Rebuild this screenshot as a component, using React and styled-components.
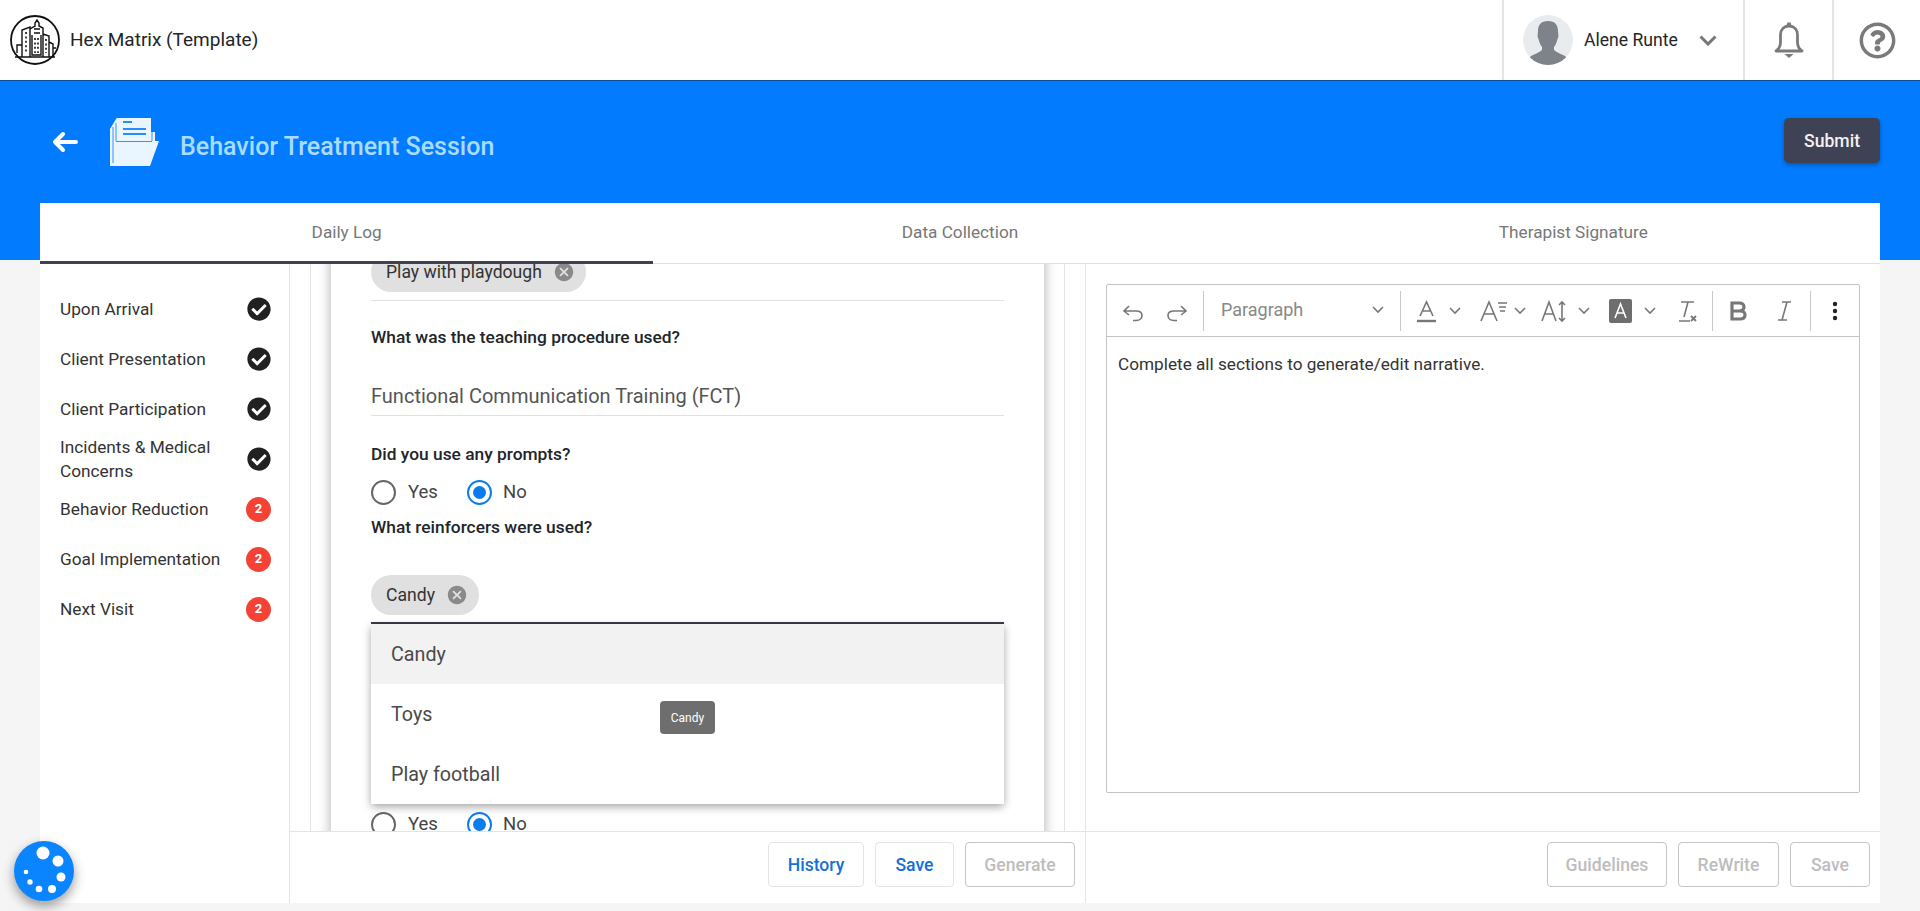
import React from 'react'
import styled, { createGlobalStyle } from 'styled-components'
import { FaCheckCircle, FaRegQuestionCircle } from 'react-icons/fa'
import { MdCancel } from 'react-icons/md'

const GlobalStyle = createGlobalStyle`
  html, body {
    margin: 0;
    padding: 0;
    height: 911px;
    overflow: hidden;
    background: #f5f5f5;
    font-family: Roboto, "Liberation Sans", sans-serif;
  }
  * { box-sizing: border-box; }
`

const Header = styled.header`
  display: flex;
  align-items: stretch;
  height: 81px;
  background: #fff;
  border-bottom: 1px solid #0b4f9c;
`
const Brand = styled.div`
  display: flex;
  align-items: center;
  flex: 1;
  gap: 10px;
  padding-left: 10px;
  font-size: 19px;
  color: #212529;
`
const BrandName = styled.span`
  margin-top: -2px;
`
const HeaderCell = styled.div`
  display: flex;
  align-items: center;
  justify-content: ${(p) => (p.$center ? 'center' : 'flex-start')};
  width: ${(p) => p.$w}px;
  padding-left: ${(p) => p.$pad || 0}px;
  border-left: 2px solid #e4e4e4;
`
const Avatar = styled.div`
  width: 50px;
  height: 50px;
  border-radius: 50%;
  background: #e9ecef;
  overflow: hidden;
  margin-right: 11px;
`
const UserName = styled.span`
  font-size: 17.6px;
  color: #212529;
  width: 115px;
`

const Band = styled.div`
  height: 179px;
  background: #027bff;
  padding: 0 40px;
  display: flex;
  flex-direction: column;
`
const BandRow = styled.div`
  flex: 1;
  display: flex;
  align-items: center;
  padding-left: 12px;
`
const BackArrow = styled.svg`
  width: 26px;
  height: 22px;
  margin-right: 30px;
`
const FolderIcon = styled.svg`
  width: 51px;
  height: 50px;
  margin-right: 21px;
`
const Title = styled.h1`
  margin: 8px 0 0;
  flex: 1;
  font-size: 25px;
  font-weight: 500;
  color: #a9dcff;
`
const SubmitButton = styled.button`
  width: 96px;
  height: 45px;
  border: 0;
  border-radius: 5px;
  background: #3f4254;
  color: #f2f2f2;
  font: 500 17.6px Roboto, sans-serif;
  box-shadow: 0 2px 4px rgba(0, 0, 0, 0.3);
  margin-bottom: 3px;
`
const Tabs = styled.nav`
  display: flex;
  height: 61px;
  margin-bottom: -4px;
  background: #fff;
  border-bottom: 1px solid #e0e0e0;
`
const Tab = styled.div`
  flex: 1;
  display: flex;
  align-items: center;
  justify-content: center;
  font-size: 17.2px;
  color: #777;
  margin-bottom: -1px;
  border-bottom: 3px solid ${(p) => (p.$active ? '#3f4254' : 'transparent')};
`

const Main = styled.main`
  display: flex;
  height: 639px;
  margin: 4px 40px 0;
  background: #fff;
`
const Sidebar = styled.aside`
  width: 250px;
  flex: none;
  padding-top: 20px;
  border-right: 1px solid #e4e4e4;
`
const SideRow = styled.div`
  display: flex;
  align-items: center;
  justify-content: space-between;
  height: 50px;
  padding: 0 18px 0 20px;
  font-size: 17.25px;
  line-height: 24px;
  color: #333;
  svg {
    flex: none;
    font-size: 24px;
    color: #212121;
  }
`
const SideLabel = styled.span`
  max-width: 170px;
  margin-top: -1px;
`
const CountBadge = styled.span`
  flex: none;
  display: flex;
  align-items: center;
  justify-content: center;
  width: 25px;
  height: 25px;
  border-radius: 50%;
  background: #f44336;
  color: #fff;
  font-size: 13px;
  font-weight: 700;
`

const Column = styled.section`
  display: flex;
  flex-direction: column;
  width: ${(p) => p.$w}px;
  flex: none;
  border-right: ${(p) => (p.$divided ? '1px solid #e4e4e4' : '0')};
`
const Pane = styled.div`
  flex: 1;
  min-height: 0;
  overflow: hidden;
  padding: ${(p) => (p.$editor ? '20px 20px 38px' : '0 20px')};
  display: flex;
  flex-direction: column;
`
const Gutter = styled.div`
  flex: 1;
  min-height: 0;
  display: flex;
  overflow: hidden;
  padding: 0 20px;
  border-left: 1px solid #e4e4e4;
  border-right: 1px solid #e4e4e4;
`
const FormCard = styled.div`
  flex: 1;
  min-width: 0;
  margin: -20px 0;
  padding: 0 40px;
  background: #fff;
  box-shadow: 0 0 12px rgba(0, 0, 0, 0.32);
`
const ChipField = styled.div`
  position: relative;
  margin-top: ${(p) => p.$top}px;
  padding-bottom: ${(p) => (p.$focused ? 7 : 8)}px;
  border-bottom: ${(p) => (p.$focused ? '2px solid #3a3b4c' : '1px solid #e0e0e0')};
`
const Chip = styled.span`
  display: inline-flex;
  align-items: center;
  height: 40px;
  padding: 0 11px 0 15px;
  gap: 11px;
  border-radius: 20px;
  background: #e0e0e0;
  font-size: 17.6px;
  color: #333;
  svg {
    font-size: 22px;
    color: #8a8a8a;
  }
`
const Question = styled.div`
  margin-top: ${(p) => p.$top}px;
  font-size: 17.35px;
  line-height: 24px;
  font-weight: 500;
  color: #212529;
`
const TextField = styled.div`
  margin-top: 35px;
  padding-bottom: 7px;
  font-size: 20px;
  line-height: 24px;
  color: #555;
  border-bottom: 1px solid #e0e0e0;
`
const RadioRow = styled.div`
  display: flex;
  align-items: center;
  height: 24px;
  margin-top: ${(p) => p.$top}px;
  font-size: 18.5px;
  color: #444;
`
const RadioCircle = styled.span`
  display: inline-flex;
  align-items: center;
  justify-content: center;
  width: 25px;
  height: 25px;
  border-radius: 50%;
  border: 2px solid ${(p) => (p.$on ? '#0a7cf0' : '#666')};
  margin-right: ${(p) => (p.$on ? 11 : 12)}px;
  &::after {
    content: '';
    display: ${(p) => (p.$on ? 'block' : 'none')};
    width: 13px;
    height: 13px;
    border-radius: 50%;
    background: #0a7cf0;
  }
`
const RadioLabel = styled.span`
  width: 59px;
`
const Menu = styled.ul`
  position: absolute;
  top: 100%;
  left: 0;
  right: 0;
  z-index: 5;
  margin: 2px 0 0;
  padding: 0;
  list-style: none;
  background: #fff;
  border-radius: 0 0 4px 4px;
  box-shadow: 0 3px 8px rgba(0, 0, 0, 0.35);
`
const MenuItem = styled.li`
  display: flex;
  align-items: center;
  height: 60px;
  padding-left: 20px;
  font-size: 19.7px;
  color: #4a4a4a;
  background: ${(p) => (p.$active ? '#f2f2f2' : '#fff')};
`
const Tooltip = styled.div`
  position: absolute;
  left: 289px;
  top: 77px;
  width: 55px;
  height: 33px;
  display: flex;
  align-items: center;
  justify-content: center;
  border-radius: 4px;
  background: #6e6e6e;
  color: #fff;
  font-size: 12px;
`

const Footer = styled.footer`
  display: flex;
  justify-content: flex-end;
  gap: ${(p) => p.$gap}px;
  height: 72px;
  flex: none;
  padding: 10px ${(p) => p.$right}px 0 0;
  border-top: 1px solid #e4e4e4;
`
const ActionButton = styled.button`
  width: ${(p) => p.$w}px;
  height: 45px;
  background: #fff;
  border-radius: 4px;
  border: 1px solid ${(p) => (p.disabled ? '#c4c4c4' : '#e4e4e4')};
  color: ${(p) => (p.disabled ? '#bdbdbd' : '#1470d6')};
  font: 500 17.6px Roboto, sans-serif;
  padding: 0;
`

const Editor = styled.div`
  flex: 1;
  display: flex;
  flex-direction: column;
  border: 1px solid #c4c4c4;
  border-radius: 2px;
`
const Toolbar = styled.div`
  display: flex;
  align-items: center;
  height: 52px;
  flex: none;
  padding-left: 4px;
  border-bottom: 1px solid #c4c4c4;
  color: #777;
`
const Tool = styled.span`
  display: inline-flex;
  align-items: center;
  justify-content: ${(p) => (p.$spread ? 'space-between' : 'center')};
  width: ${(p) => p.$w}px;
  margin-left: ${(p) => p.$ml || 0}px;
  flex: none;
`
const ToolDivider = styled.span`
  width: 1px;
  height: 40px;
  flex: none;
  margin-left: ${(p) => p.$ml || 0}px;
  background: #c9c9c9;
`
const ParagraphSelect = styled.span`
  display: inline-flex;
  align-items: center;
  justify-content: space-between;
  width: 196px;
  height: 24px;
  padding: 0 16px 2px 17px;
  font-size: 18px;
  color: #888;
`
const EditorBody = styled.div`
  flex: 1;
  padding: 15px 11px;
  font-size: 17.2px;
  line-height: 24px;
  color: #333;
`

const Fab = styled.div`
  position: fixed;
  left: 14px;
  bottom: 10px;
  width: 60px;
  height: 60px;
  border-radius: 50%;
  background: #0a84ff;
  box-shadow: 0 5px 12px rgba(0, 0, 0, 0.4);
`

const Logo = () => (
  <svg width="50" height="50" viewBox="0 0 50 50" fill="none" stroke="#111" strokeWidth="1.4">
    <circle cx="25" cy="25" r="24" strokeWidth="1.8" />
    <path d="M12 42V15l8-3v30M20 42V14l5-3V8l2-3 2 3v3l4 2v29H20zM33 19l6 2v21M39 27l4 2v13M12 30H7v8M43 33h3M5 42h40" />
    <path d="M24 18h6M24 14h6M22 20v20h9V20" />
    <path d="M16 17v21M25 23v15M28 23v15M36 24v14" strokeDasharray="2 2.4" strokeWidth="1.6" />
  </svg>
)

const Silhouette = () => (
  <svg width="50" height="50" viewBox="0 0 50 50" fill="#7d8389">
    <path d="M25 6c7 0 10 4 10 10 0 3 1 5 0 7-.5 1-1 2-1 3-1 3-2 5-3 6v3c2 2 5 3 9 5 3 1 4 3 5 5v5H5v-5c1-2 2-4 5-5 4-2 7-3 9-5v-3c-1-1-2-3-3-6 0-1-.5-2-1-3-1-2 0-4 0-7 0-6 3-10 10-10z" />
  </svg>
)

const BellIcon = () => (
  <svg width="30" height="36" viewBox="0 0 30 36" fill="none" stroke="#7a7a7a" strokeWidth="2.8">
    <path d="M2 29c3-2 4.500-4.500 4.500-9v-7c0-5.500 3.500-9 8.500-9s8.500 3.500 8.500 9v7c0 4.500 1.500 7 4.500 9z" strokeLinejoin="round" />
    <circle cx="15" cy="2.500" r="2.200" fill="#7a7a7a" stroke="none" />
    <path d="M10.500 32h9l-4.500 4z" fill="#7a7a7a" stroke="none" />
  </svg>
)

const UserChevron = () => (
  <svg width="18" height="11" viewBox="0 0 18 11" fill="none" stroke="#777" strokeWidth="3">
    <path d="M1.500 1.500L9 9l7.500-7.500" />
  </svg>
)

const Chevron = () => (
  <svg width="12" height="8" viewBox="0 0 12 8" fill="none" stroke="#777" strokeWidth="1.6">
    <path d="M1 1l5 5 5-5" />
  </svg>
)

const Icon = ({ w, h = 24, children }) => (
  <svg width={w} height={h} viewBox={`0 0 ${w} ${h}`} fill="none" stroke="#777" strokeWidth="1.6">
    {children}
  </svg>
)

const sideItems = [
  ['Upon Arrival'],
  ['Client Presentation'],
  ['Client Participation'],
  ['Incidents & Medical Concerns'],
  ['Behavior Reduction', 2],
  ['Goal Implementation', 2],
  ['Next Visit', 2]
]

const App = () => {
  return (
    <>
      <GlobalStyle />
      <Header>
        <Brand>
          <Logo />
          <BrandName>Hex Matrix (Template)</BrandName>
        </Brand>
        <HeaderCell $w={241} $pad={19}>
          <Avatar>
            <Silhouette />
          </Avatar>
          <UserName>Alene Runte</UserName>
          <UserChevron />
        </HeaderCell>
        <HeaderCell $w={89} $center>
          <BellIcon />
        </HeaderCell>
        <HeaderCell $w={88} $center>
          <FaRegQuestionCircle size={37} color="#7a7a7a" />
        </HeaderCell>
      </Header>

      <Band>
        <BandRow>
          <BackArrow viewBox="0 0 26 22" fill="none" stroke="#fff" strokeWidth="4" strokeLinecap="round" strokeLinejoin="round">
            <path d="M11 3l-8 8 8 8M4 11h20" />
          </BackArrow>
          <FolderIcon viewBox="0 0 51 50">
            <path d="M2 49V12L8 2l1-1h34v14h4v9h4l-9 25z" fill="#eaf6ff" />
            <path d="M5 10v36M8 6v18" stroke="#027bff" strokeWidth="0.8" fill="none" />
            <path d="M8 24.500h36M44 15v9" stroke="#027bff" strokeWidth="0.8" fill="none" />
            <path d="M15 5h9M15 12h23M15 17h23" stroke="#2a8cf5" strokeWidth="1.8" fill="none" />
          </FolderIcon>
          <Title>Behavior Treatment Session</Title>
          <SubmitButton>Submit</SubmitButton>
        </BandRow>
        <Tabs>
          <Tab $active>Daily Log</Tab>
          <Tab>Data Collection</Tab>
          <Tab>Therapist Signature</Tab>
        </Tabs>
      </Band>

      <Main>
        <Sidebar>
          {sideItems.map(([label, count]) => (
            <SideRow key={label}>
              <SideLabel>{label}</SideLabel>
              {count ? <CountBadge>{count}</CountBadge> : <FaCheckCircle />}
            </SideRow>
          ))}
        </Sidebar>

        <Column $w={796} $divided>
          <Pane>
            <Gutter>
              <FormCard>
                <ChipField $top={8}>
                  <Chip>
                    Play with playdough
                    <MdCancel />
                  </Chip>
                </ChipField>
                <Question $top={24}>What was the teaching procedure used?</Question>
                <TextField>Functional Communication Training (FCT)</TextField>
                <Question $top={26}>Did you use any prompts?</Question>
                <RadioRow $top={14}>
                  <RadioCircle />
                  <RadioLabel>Yes</RadioLabel>
                  <RadioCircle $on />
                  <span>No</span>
                </RadioRow>
                <Question $top={11}>What reinforcers were used?</Question>
                <ChipField $top={36} $focused>
                  <Chip>
                    Candy
                    <MdCancel />
                  </Chip>
                  <Menu>
                    <MenuItem $active>Candy</MenuItem>
                    <MenuItem>Toys</MenuItem>
                    <MenuItem>Play football</MenuItem>
                    <Tooltip>Candy</Tooltip>
                  </Menu>
                </ChipField>
                <RadioRow $top={188}>
                  <RadioCircle />
                  <RadioLabel>Yes</RadioLabel>
                  <RadioCircle $on />
                  <span>No</span>
                </RadioRow>
              </FormCard>
            </Gutter>
          </Pane>
          <Footer $gap={11} $right={10}>
            <ActionButton $w={96}>History</ActionButton>
            <ActionButton $w={79}>Save</ActionButton>
            <ActionButton $w={110} disabled>
              Generate
            </ActionButton>
          </Footer>
        </Column>

        <Column $w={794}>
          <Pane $editor>
            <Editor>
              <Toolbar>
                <Tool $w={44}>
                  <Icon w={22}>
                    <path d="M7 7L2 12l5 4M2 12h12c4 0 6 2 6 4.500s-2 5-6 5h-3" />
                  </Icon>
                </Tool>
                <Tool $w={44}>
                  <Icon w={22}>
                    <path d="M15 7l5 5-5 4M20 12H8c-4 0-6 2-6 4.500s2 5 6 5h3" />
                  </Icon>
                </Tool>
                <ToolDivider $ml={4} />
                <ParagraphSelect>
                  Paragraph
                  <Chevron />
                </ParagraphSelect>
                <ToolDivider />
                <Tool $w={44} $ml={16} $spread>
                  <Icon w={19}>
                    <path d="M3 17L9.500 3 16 17M5.500 12h8" />
                    <path d="M0 22h19" strokeWidth="2.4" />
                  </Icon>
                  <Chevron />
                </Tool>
                <Tool $w={46} $ml={19} $spread>
                  <Icon w={28}>
                    <path d="M1 22L9 3l8 19M4 15h10M18 4h9M19 8h7M20 12h5" />
                  </Icon>
                  <Chevron />
                </Tool>
                <Tool $w={49} $ml={15} $spread>
                  <Icon w={26}>
                    <path d="M1 22L8 3l7 19M3.500 15h9M21 3v19M18 6l3-3 3 3M18 19l3 3 3-3" />
                  </Icon>
                  <Chevron />
                </Tool>
                <Tool $w={47} $ml={19} $spread>
                  <Icon w={23}>
                    <rect x="0" y="0" width="23" height="24" rx="2" fill="#6e6e6e" stroke="none" />
                    <path d="M6 19L11.500 5 17 19M8 14h7" stroke="#fff" />
                  </Icon>
                  <Chevron />
                </Tool>
                <Tool $w={21} $ml={20}>
                  <Icon w={21}>
                    <path d="M5 3h13M12 3L8 18M3 22h11" />
                    <path d="M15 17l5 5M20 17l-5 5" strokeWidth="1.8" />
                  </Icon>
                </Tool>
                <ToolDivider $ml={15} />
                <Tool $w={18} $ml={16}>
                  <Icon w={18}>
                    <path d="M3 4h7c3 0 5 1.500 5 4s-2 4-5 4H3zM3 12h8c3 0 5 1.500 5 4s-2 4-5 4H3z" strokeWidth="3.2" />
                  </Icon>
                </Tool>
                <Tool $w={14} $ml={30}>
                  <Icon w={14}>
                    <path d="M5 3h9M1 21h9M10 3L5 21" />
                  </Icon>
                </Tool>
                <ToolDivider $ml={19} />
                <Tool $w={6} $ml={21}>
                  <Icon w={6}>
                    <circle cx="3" cy="5" r="2.200" fill="#222" stroke="none" />
                    <circle cx="3" cy="12" r="2.200" fill="#222" stroke="none" />
                    <circle cx="3" cy="19" r="2.200" fill="#222" stroke="none" />
                  </Icon>
                </Tool>
              </Toolbar>
              <EditorBody>Complete all sections to generate/edit narrative.</EditorBody>
            </Editor>
          </Pane>
          <Footer $gap={11} $right={10}>
            <ActionButton $w={120} disabled>
              Guidelines
            </ActionButton>
            <ActionButton $w={101} disabled>
              ReWrite
            </ActionButton>
            <ActionButton $w={80} disabled>
              Save
            </ActionButton>
          </Footer>
        </Column>
      </Main>

      <Fab>
        <svg width="60" height="60" viewBox="0 0 60 60" fill="#fff">
          <circle cx="29" cy="12" r="6.500" />
          <circle cx="44" cy="20" r="5.500" />
          <circle cx="47" cy="36" r="4.500" />
          <circle cx="38" cy="48" r="4" />
          <circle cx="25" cy="48" r="3.300" />
          <circle cx="16" cy="41" r="2.700" />
          <circle cx="12" cy="31" r="2.300" />
        </svg>
      </Fab>
    </>
  )
}

export default App
